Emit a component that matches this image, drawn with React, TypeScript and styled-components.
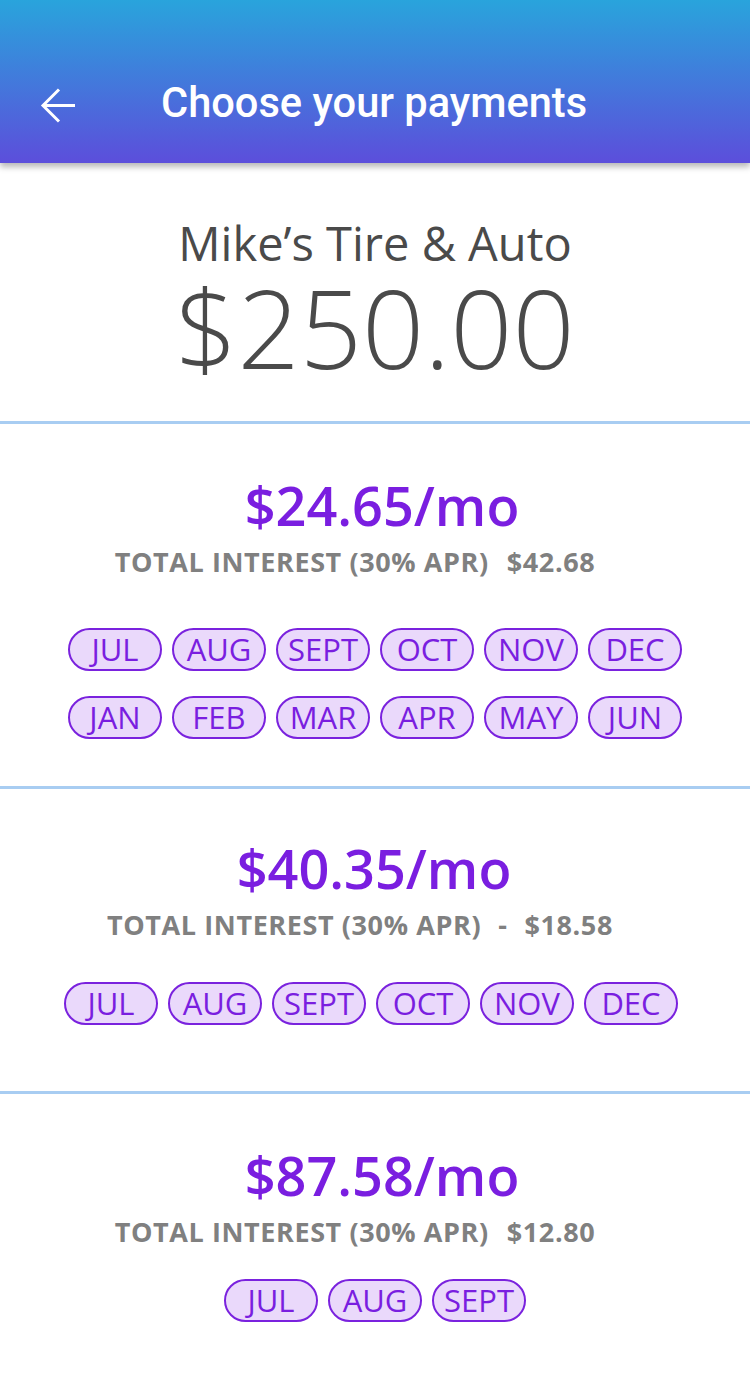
import styled, { createGlobalStyle } from "styled-components";

const GlobalStyle = createGlobalStyle`
  html, body {
    margin: 0;
    padding: 0;
    background: #fff;
  }
  body {
    font-family: "Open Sans", "Liberation Sans", sans-serif;
  }
`;

type Plan = {
  id: number;
  monthly: string;
  interest: string;
  separator?: string;
  months: string[][];
  $padTop: number;
  $pillGap: number;
  $padBottom: number;
  // horizontal nudges, the mock isn't perfectly centred
  $priceShift: number;
  $interestShift: number;
  $pillShift: number;
};

const plans: Plan[] = [
  {
    id: 0,
    monthly: "$24.65/mo",
    interest: "$42.68",
    months: [
      ["JUL", "AUG", "SEPT", "OCT", "NOV", "DEC"],
      ["JAN", "FEB", "MAR", "APR", "MAY", "JUN"],
    ],
    $padTop: 51,
    $pillGap: 51,
    $padBottom: 47,
    $priceShift: 7,
    $interestShift: -20,
    $pillShift: 0,
  },
  {
    id: 1,
    monthly: "$40.35/mo",
    interest: "$18.58",
    separator: "-",
    months: [["JUL", "AUG", "SEPT", "OCT", "NOV", "DEC"]],
    $padTop: 49,
    $pillGap: 42,
    $padBottom: 66,
    $priceShift: -1,
    $interestShift: -15,
    $pillShift: -4,
  },
  {
    id: 2,
    monthly: "$87.58/mo",
    interest: "$12.80",
    months: [["JUL", "AUG", "SEPT"]],
    $padTop: 51,
    $pillGap: 32,
    $padBottom: 69,
    $priceShift: 7,
    $interestShift: -20,
    $pillShift: 0,
  },
];

const BackArrow = () => (
  <svg width="36" height="36" viewBox="0 0 36 36" fill="none">
    <path
      d="M35 17.5H3M19 1.5L3 17.5l16 16"
      stroke="#fff"
      strokeWidth="3"
      strokeLinecap="butt"
    />
  </svg>
);

const App = () => {
  return (
    <Page>
      <GlobalStyle />
      <Header>
        <BackButton aria-label="Back">
          <BackArrow />
        </BackButton>
        <Title>Choose your payments</Title>
      </Header>

      <Summary>
        <Merchant>Mike’s Tire &amp; Auto</Merchant>
        <Amount>$250.00</Amount>
      </Summary>

      {plans.map((plan) => (
        <PlanSection
          key={plan.id}
          $padTop={plan.$padTop}
          $padBottom={plan.$padBottom}
        >
          <Monthly $shift={plan.$priceShift}>{plan.monthly}</Monthly>
          <Interest $shift={plan.$interestShift}>
            TOTAL INTEREST (30% APR)
            {plan.separator ? <Sep>{plan.separator}</Sep> : <Spacer />}
            {plan.interest}
          </Interest>
          <PillGroup $gap={plan.$pillGap} $shift={plan.$pillShift}>
            {plan.months.map((row, i) => (
              <PillRow key={i}>
                {row.map((m) => (
                  <Pill key={m}>{m}</Pill>
                ))}
              </PillRow>
            ))}
          </PillGroup>
        </PlanSection>
      ))}
    </Page>
  );
};

export default App;

const Page = styled.div`
  width: 750px;
  min-height: 1392px;
  background: #fff;
  overflow: hidden;
`;

const Header = styled.header`
  height: 163px;
  display: flex;
  align-items: center;
  padding: 48px 0 0 40px;
  box-sizing: border-box;
  background: linear-gradient(180deg, #29a4dc 0%, #5c4edb 100%);
  box-shadow: 0 4px 6px rgba(0, 0, 0, 0.28);
  position: relative;
  z-index: 1;
`;

const BackButton = styled.button`
  background: none;
  border: none;
  padding: 0;
  width: 36px;
  height: 36px;
  display: flex;
  cursor: pointer;
`;

const Title = styled.h1`
  margin: -6px 0 0 85px;
  font-family: Roboto, "Liberation Sans", sans-serif;
  font-weight: 500;
  font-size: 41.6px;
  color: #fff;
`;

const Summary = styled.section`
  display: flex;
  flex-direction: column;
  align-items: center;
  padding: 52px 0 38px;
  border-bottom: 3px solid #a8cdf2;
  color: #4a4a4a;
`;

const Merchant = styled.div`
  font-size: 47px;
  line-height: 56px;
  font-weight: 400;
`;

const Amount = styled.div`
  font-size: 109px;
  line-height: 112px;
  font-weight: 300;
`;

const PlanSection = styled.section<{ $padTop: number; $padBottom: number }>`
  display: flex;
  flex-direction: column;
  align-items: center;
  padding: ${({ $padTop }) => $padTop}px 0 ${({ $padBottom }) => $padBottom}px;
  border-bottom: 3px solid #a8cdf2;

  &:last-child {
    border-bottom: none;
  }
`;

const Monthly = styled.div<{ $shift: number }>`
  margin-left: ${({ $shift }) => $shift * 2}px;
  font-size: 54px;
  line-height: 60px;
  font-weight: 600;
  color: #7a1ee0;
`;

const Interest = styled.div<{ $shift: number }>`
  margin: 12px 0 0 ${({ $shift }) => $shift * 2}px;
  font-size: 27px;
  line-height: 30px;
  font-weight: 700;
  letter-spacing: 0.6px;
  color: #808080;
  display: flex;
  align-items: center;
`;

const Spacer = styled.span`
  width: 18px;
`;

const Sep = styled.span`
  margin: 0 17px;
`;

const PillGroup = styled.div<{ $gap: number; $shift: number }>`
  margin: ${({ $gap }) => $gap}px 0 0 ${({ $shift }) => $shift * 2}px;
  display: flex;
  flex-direction: column;
  gap: 25px;
`;

const PillRow = styled.div`
  display: flex;
  justify-content: center;
  gap: 10px;
`;

const Pill = styled.span`
  width: 94px;
  height: 43px;
  box-sizing: border-box;
  border: 2px solid #7a22de;
  border-radius: 22px;
  background: #ead9fb;
  color: #7a1ee0;
  font-size: 31px;
  font-weight: 400;
  display: flex;
  align-items: center;
  justify-content: center;
  line-height: 1;
`;
